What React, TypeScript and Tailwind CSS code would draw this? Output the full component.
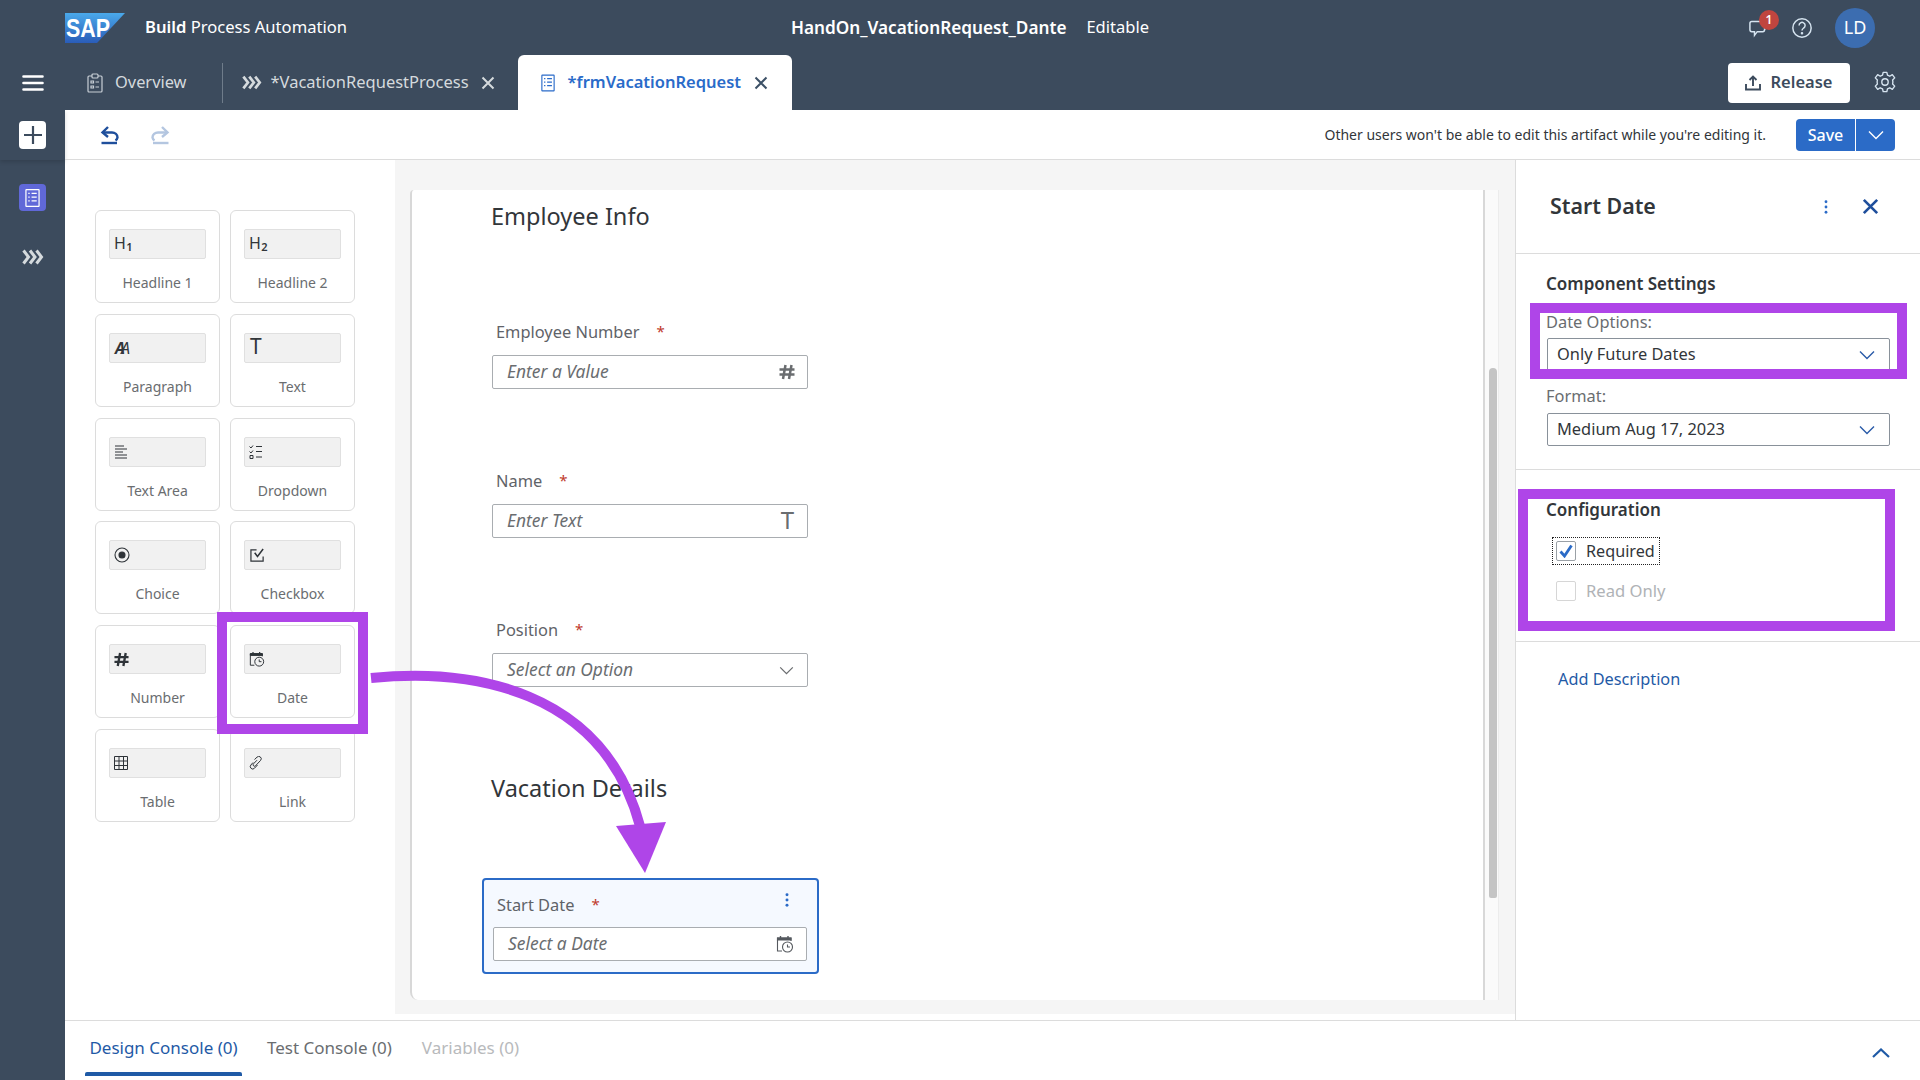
import React from "react";

function Chevrons({ className = "", color = "currentColor" }: { className?: string; color?: string }) {
  return (
    <svg viewBox="0 0 22 16" className={className} fill="none" stroke={color} strokeWidth="3">
      <polyline points="1.5,1.5 6.5,8 1.5,14.5" />
      <polyline points="8,1.5 13,8 8,14.5" />
      <polyline points="14.5,1.5 19.5,8 14.5,14.5" />
    </svg>
  );
}
function Close({ className = "", color = "currentColor", w = 2 }: { className?: string; color?: string; w?: number }) {
  return (
    <svg viewBox="0 0 14 14" className={className} fill="none" stroke={color} strokeWidth={w}>
      <path d="M1.5 1.5 L12.5 12.5 M12.5 1.5 L1.5 12.5" />
    </svg>
  );
}
function ChevronDown({ className = "", color = "currentColor" }: { className?: string; color?: string }) {
  return (
    <svg viewBox="0 0 16 10" className={className} fill="none" stroke={color} strokeWidth="1.4">
      <polyline points="1,1.5 8,8.5 15,1.5" />
    </svg>
  );
}
function CalClock({ className = "" }: { className?: string }) {
  return (
    <svg viewBox="0 0 18 18" className={className} fill="none" stroke="currentColor" strokeWidth="1.1">
      <path d="M6 16 H1.5 V3 H15 V6" />
      <path d="M1.5 3 H15 V5 H1.5 Z" fill="currentColor" />
      <path d="M4.5 1 V3 M12 1 V3" strokeWidth="1.4" />
      <circle cx="11.5" cy="12" r="5" fill="none" />
      <path d="M11.5 9.5 V12 H14" />
    </svg>
  );
}
function FormIcon({ className = "" }: { className?: string }) {
  return (
    <svg viewBox="0 0 16 20" className={className} fill="none" stroke="currentColor" strokeWidth="1.3">
      <rect x="1" y="1" width="14" height="18" rx="0.5" />
      <path d="M3.5 5 H5 M7 5 H12.5 M3.5 9 H5 M7 9 H12.5 M3.5 13 H5 M7 13 H12.5" />
    </svg>
  );
}
function Clipboard({ className = "" }: { className?: string }) {
  return (
    <svg viewBox="0 0 16 20" className={className} fill="none" stroke="currentColor" strokeWidth="1.2">
      <rect x="1" y="3" width="14" height="16" rx="1" />
      <rect x="5" y="1" width="6" height="4" rx="1" fill="#3c4b5d" />
      <path d="M4 8 H6.5 V10 H4 Z M4 13 H6.5 V15 H4 Z M8.5 9 H12 M8.5 14 H12" />
    </svg>
  );
}
function Hash({ className = "" }: { className?: string }) {
  return (
    <svg viewBox="0 0 16 16" className={className} fill="none" stroke="currentColor" strokeWidth="2.5">
      <path d="M6.5 1 L4 15 M12.5 1 L10 15 M0.5 5.5 H15.5 M0.5 10.5 H15.5" />
    </svg>
  );
}

function PaletteCard({ label, icon }: { label: string; icon: React.ReactNode }) {
  return (
    <div className="h-[93px] rounded-[6px] border border-[#dcdcdc] bg-white flex flex-col items-center pt-[18px]">
      <div className="w-[97px] h-[30px] rounded-[2px] border border-[#e0e0e0] bg-[#f1f1f1] flex items-center pl-[4px] text-[#2e3338]">
        {icon}
      </div>
      <div className="mt-[14px] text-[14px] leading-[20px] text-[#6a6d70]">{label}</div>
    </div>
  );
}

function Sub({ n }: { n: string }) {
  return (
    <span className="mb-[3px] text-[16px] leading-none text-[#32363a] tracking-[0.5px]">
      H<span className="text-[11px] font-semibold relative top-[2px]">{n}</span>
    </span>
  );
}

const palette: { label: string; icon: React.ReactNode }[] = [
  { label: "Headline 1", icon: <Sub n="1" /> },
  { label: "Headline 2", icon: <Sub n="2" /> },
  {
    label: "Paragraph",
    icon: (
      <span className="ml-[1px] text-[16px] leading-none italic text-[#32363a] tracking-[-4px]">
        <b>A</b>A
      </span>
    ),
  },
  { label: "Text", icon: <span className="mb-[3px] text-[21px] leading-none text-[#32363a] ml-[1px]">T</span> },
  {
    label: "Text Area",
    icon: (
      <svg viewBox="0 0 12 14" className="w-[12px] h-[14px] ml-[1px]" stroke="currentColor" strokeWidth="1">
        <path d="M0 1 H9 M0 4 H12 M0 7 H8 M0 10 H12 M0 13 H12" />
      </svg>
    ),
  },
  {
    label: "Dropdown",
    icon: (
      <svg viewBox="0 0 14 14" className="w-[14px] h-[14px]" fill="none" stroke="currentColor" strokeWidth="1">
        <path d="M0.5 1.5 L2 3 L4 0.5 M0.5 6.5 L2 8 L4 5.5 M1 10.5 H4 V13.5 H1 Z M7 1.5 H13 M7 6.5 H13 M7 12 H13" />
      </svg>
    ),
  },
  {
    label: "Choice",
    icon: (
      <svg viewBox="0 0 16 16" className="w-[16px] h-[16px]" fill="none" stroke="currentColor" strokeWidth="1.1">
        <circle cx="8" cy="8" r="7" />
        <circle cx="8" cy="8" r="3" fill="currentColor" />
      </svg>
    ),
  },
  {
    label: "Checkbox",
    icon: (
      <svg viewBox="0 0 16 16" className="w-[15px] h-[15px] ml-[1px]" fill="none" stroke="currentColor" strokeWidth="1.3">
        <path d="M14 9 V14 H1 V2 H7" />
        <path d="M5 5 L8 9 L14 1" strokeWidth="1.6" />
      </svg>
    ),
  },
  { label: "Number", icon: <Hash className="w-[15px] h-[15px]" /> },
  { label: "Date", icon: <CalClock className="w-[16px] h-[16px]" /> },
  {
    label: "Table",
    icon: (
      <svg viewBox="0 0 14 14" className="w-[14px] h-[14px]" fill="none" stroke="currentColor" strokeWidth="1">
        <path d="M0.5 0.5 H13.5 V13.5 H0.5 Z M0.5 5 H13.5 M0.5 9.5 H13.5 M5 0.5 V13.5 M9.5 0.5 V13.5" />
      </svg>
    ),
  },
  {
    label: "Link",
    icon: (
      <svg viewBox="0 0 14 14" className="w-[14px] h-[14px]" fill="none" stroke="currentColor" strokeWidth="1">
        <path d="M5.5 3.5 L8 1.2 a2.3 2.3 0 0 1 3.6 3.2 L6.5 9.8 a1.4 1.4 0 0 1 -2 -2 L8 4.2" />
        <path d="M8.5 9 L5.5 12.2 a2.3 2.3 0 0 1 -3.6 -3.2 L4 6.5" />
      </svg>
    ),
  },
];

function FieldInput({ text, icon, className = "" }: { text: string; icon: React.ReactNode; className?: string }) {
  return (
    <div className={"h-[34px] rounded-[2px] border border-[#a9adb1] bg-white flex items-center justify-between pl-[14px] text-[#6a6d70] " + className}>
      <span className="italic text-[17.4px] leading-[20px] mb-[3px]">{text}</span>
      {icon}
    </div>
  );
}

function Label({ text }: { text: string }) {
  return (
    <div className="text-[16.4px] leading-[20px] text-[#5f6368] pl-[4px] flex">
      <span>{text}</span>
      <span className="ml-[17px] text-[15px] leading-[18px] text-[#c0392b]">*</span>
    </div>
  );
}

function Select({ text }: { text: string }) {
  return (
    <div className="h-[33px] ml-[31px] mr-[30px] rounded-[2px] border border-[#89919a] flex items-center justify-between pl-[9px] pr-[14px] text-[16.4px] text-[#32363a]">
      <span>{text}</span>
      <ChevronDown className="w-[16px] h-[10px]" color="#2a5ba8" />
    </div>
  );
}

export default function App() {
  return (
    <div className="relative w-[1920px] h-[1080px] overflow-hidden flex flex-col bg-white font-['Noto_Sans','Open_Sans',sans-serif]">
      {/* header */}
      <div className="h-[55px] bg-[#3c4b5d] flex items-center text-white relative">
        <div className="ml-[65px] w-[60px] h-[30px]">
          <svg viewBox="0 0 60 30" className="w-[60px] h-[30px]">
            <defs>
              <linearGradient id="sapg" x1="0" y1="0" x2="0" y2="1">
                <stop offset="0" stopColor="#4aa9ea" />
                <stop offset="1" stopColor="#2a5cb8" />
              </linearGradient>
            </defs>
            <polygon points="0,0 60,0 32,30 0,30" fill="url(#sapg)" />
            <text x="1" y="24" fontFamily="Liberation Sans" fontWeight="700" fontSize="25" fill="#fff" textLength="44" lengthAdjust="spacingAndGlyphs">SAP</text>
          </svg>
        </div>
        <div className="ml-[20px] text-[16.6px] w-[646px]">
          <b className="font-semibold">Build</b> Process Automation
        </div>
        <div className="text-[17.2px] font-semibold">HandOn_VacationRequest_Dante</div>
        <div className="ml-[20px] text-[16.5px]">Editable</div>
        <div className="ml-auto flex items-center mr-[45px]">
          <div className="relative w-[22px] h-[22px] text-[#d6e4f0]">
            <svg viewBox="0 0 24 24" className="w-[22px] h-[22px]" fill="none" stroke="currentColor" strokeWidth="1.6">
              <path d="M3 5 H15 a2 2 0 0 1 2 2 V14 a2 2 0 0 1 -2 2 H9 L6 20 V16 H3 a2 2 0 0 1 -2 -2 V7 a2 2 0 0 1 2 -2 Z" />
              <path d="M12 3 a6 6 0 0 1 10 4 a6 6 0 0 1 -5 6" />
            </svg>
            <div className="absolute left-[10px] top-[-7px] w-[20px] h-[20px] rounded-full bg-[#c0453f] text-white text-[12px] font-semibold flex items-center justify-center">1</div>
          </div>
          <svg viewBox="0 0 24 24" className="w-[22px] h-[22px] ml-[20px] text-[#d6e4f0]" fill="none" stroke="currentColor" strokeWidth="1.6">
            <circle cx="12" cy="12" r="10" />
            <path d="M8.8 9.2 a3.3 3.3 0 1 1 5 2.8 c-1.2 .8 -1.8 1.4 -1.8 2.8" />
            <circle cx="12" cy="17.8" r="0.6" fill="currentColor" />
          </svg>
          <div className="ml-[22px] w-[40px] h-[40px] rounded-full bg-[#3c6db0] flex items-center justify-center text-[18px]">LD</div>
        </div>
      </div>

      {/* tabs row */}
      <div className="h-[55px] bg-[#3c4b5d] flex items-center text-[#d5dadd] relative">
        <svg viewBox="0 0 22 16" className="w-[22px] h-[16px] ml-[22px]" stroke="#fff" strokeWidth="2.6" strokeLinecap="round">
          <path d="M1.5 1.5 H20.5 M1.5 8 H20.5 M1.5 14.5 H20.5" />
        </svg>
        <Clipboard className="w-[16px] h-[20px] ml-[43px] text-[#c8cfd6]" />
        <span className="ml-[12px] text-[16.4px] mb-[1px]">Overview</span>
        <div className="ml-[35px] w-px h-[40px] bg-[#6f7c8a]" />
        <Chevrons className="ml-[19px] w-[20px] h-[15px]" color="#d5dadd" />
        <span className="ml-[9px] text-[16.5px] mb-[1px]">*VacationRequestProcess</span>
        <Close className="ml-[12px] w-[14px] h-[14px]" color="#d5dadd" />
        <div className="ml-[23px] w-[274px] h-[55px] bg-white rounded-t-[6px] flex items-center pl-[23px]">
          <FormIcon className="w-[14px] h-[20px] text-[#2a6bc9]" />
          <span className="ml-[13px] text-[16.5px] font-semibold text-[#2a6bc9] mb-[1px]">*frmVacationRequest</span>
          <Close className="ml-[13px] w-[14px] h-[14px]" color="#3c5066" />
        </div>
        <div className="ml-auto mr-[70px] w-[122px] h-[40px] rounded-[4px] bg-white flex items-center justify-center text-[#3c4b5d] text-[16.5px] font-semibold">
          <svg viewBox="0 0 16 16" className="w-[16px] h-[16px] mr-[9px]" fill="none" stroke="currentColor" strokeWidth="1.9">
            <path d="M1 9 V14.5 H15 V9 M8 11 V2 M4.5 5 L8 1.5 L11.5 5" />
          </svg>
          Release
        </div>
        <svg viewBox="0 0 24 24" className="absolute left-[1874px] top-[16px] w-[22px] h-[22px] text-[#d6e4f0]" fill="none" stroke="currentColor" strokeWidth="1.5">
          <circle cx="12" cy="12" r="3.5" />
          <path d="M10 1.5 H14 L14.7 4.6 L17.2 5.7 L20 4 L22.6 7.5 L20.3 9.7 L20.6 12 L20.3 14.3 L22.6 16.5 L20 20 L17.2 18.3 L14.7 19.4 L14 22.5 H10 L9.3 19.4 L6.8 18.3 L4 20 L1.4 16.5 L3.7 14.3 L3.4 12 L3.7 9.7 L1.4 7.5 L4 4 L6.8 5.7 L9.3 4.6 Z" strokeLinejoin="round" />
        </svg>
      </div>

      {/* body */}
      <div className="flex-1 flex min-h-0">
        {/* sidebar */}
        <div className="w-[65px] bg-[#3c4b5d] flex flex-col items-center">
          <div className="w-full h-[50px] flex items-start justify-center pt-[11px] shadow-[0_2px_4px_rgba(0,0,0,0.15)]">
            <div className="w-[27px] h-[28px] rounded-[4px] bg-white flex items-center justify-center">
              <svg viewBox="0 0 18 18" className="w-[18px] h-[18px]" stroke="#3c4b5d" strokeWidth="2.2">
                <path d="M9 0 V18 M0 9 H18" />
              </svg>
            </div>
          </div>
          <div className="mt-[24px] w-[27px] h-[27px] rounded-[4px] bg-[#6068d8] flex items-center justify-center text-white">
            <FormIcon className="w-[15px] h-[20px]" />
          </div>
          <Chevrons className="mt-[38px] w-[22px] h-[16px]" color="#d5dadd" />
        </div>

        <div className="flex-1 flex flex-col min-w-0">
          {/* toolbar */}
          <div className="h-[50px] border-b border-[#dcdcdc] flex items-center pl-[35px] pr-[25px]">
            <svg viewBox="0 0 20 20" className="mt-[1px] w-[20px] h-[20px] text-[#1f4f9c]" fill="none" stroke="currentColor" strokeWidth="2.4">
              <path d="M8 2 L2.5 7.5 L8 12" />
              <path d="M3 7.5 H12 a5.5 5 0 0 1 5.5 5 a4.5 4.5 0 0 1 -2 3" />
              <path d="M1.5 18 H17" />
            </svg>
            <svg viewBox="0 0 20 20" className="mt-[1px] ml-[30px] w-[20px] h-[20px] text-[#b4c6e0]" fill="none" stroke="currentColor" strokeWidth="2.4">
              <path d="M12 2 L17.5 7.5 L12 12" />
              <path d="M17 7.5 H8 a5.5 5 0 0 0 -5.5 5 a4.5 4.5 0 0 0 2 3" />
              <path d="M18.5 18 H3" />
            </svg>
            <div className="ml-auto text-[14px] text-[#32363a]">Other users won't be able to edit this artifact while you're editing it.</div>
            <div className="ml-[30px] flex h-[32px] rounded-[4px] overflow-hidden bg-[#2b6bc7] text-white">
              <div className="w-[60px] flex items-center justify-center text-[16px] font-medium border-r border-white">Save</div>
              <div className="w-[39px] flex items-center justify-center">
                <ChevronDown className="w-[16px] h-[10px]" color="#fff" />
              </div>
            </div>
          </div>

          {/* content */}
          <div className="flex-1 flex min-h-0">
            {/* palette */}
            <div className="w-[330px] pt-[50px] pl-[30px]">
              <div className="grid grid-cols-[125px_125px] gap-x-[10px] gap-y-[11px]">
                {palette.slice(0, 6).map((p) => (
                  <PaletteCard key={p.label} label={p.label} icon={p.icon} />
                ))}
              </div>
              <div className="mt-[10px] grid grid-cols-[125px_125px] gap-x-[10px] gap-y-[11px]">
                {palette.slice(6).map((p) => (
                  <PaletteCard key={p.label} label={p.label} icon={p.icon} />
                ))}
              </div>
            </div>

            {/* canvas */}
            <div className="w-[1120px] mb-[6px] bg-[#f5f5f5] pl-[15px] pt-[30px] flex">
              <div className="w-[1075px] h-[810px] bg-white border-l-2 border-r-2 border-[#d8d8d8] rounded-bl-[8px] rounded-tl-[4px] pl-[79px] pt-[8px]">
                <div className="text-[23.5px] leading-[36px] text-[#32363a]">Employee Info</div>
                <div className="w-[316px] ml-[1px] mt-[88px]">
                  <Label text="Employee Number" />
                  <FieldInput text="Enter a Value" className="mt-[13px] pr-[12px]" icon={<Hash className="w-[16px] h-[16px] text-[#6a6d70]" />} />
                </div>
                <div className="w-[316px] ml-[1px] mt-[82px]">
                  <Label text="Name" />
                  <FieldInput text="Enter Text" className="mt-[13px] pr-[13px]" icon={<span className="mb-[3px] text-[24px] leading-none text-[#6a6d70]">T</span>} />
                </div>
                <div className="w-[316px] ml-[1px] mt-[82px]">
                  <Label text="Position" />
                  <FieldInput text="Select an Option" className="mt-[13px] pr-[13px]" icon={<ChevronDown className="w-[15px] h-[9px]" color="#6a6d70" />} />
                </div>
                <div className="text-[23.5px] leading-[36px] text-[#32363a] mt-[83px]">Vacation Details</div>
                <div className="w-[337px] h-[96px] ml-[-9px] mt-[72px] rounded-[4px] border-2 border-[#2b6bc7] bg-[#f5f9ff] pl-[9px] pt-[15px] pr-[10px]">
                  <div className="flex items-start justify-between pr-[18px]">
                    <Label text="Start Date" />
                    <svg viewBox="0 0 4 16" className="w-[4px] h-[14px] mt-[-2px]" fill="#2b6bc7">
                      <circle cx="2" cy="2" r="1.7" /><circle cx="2" cy="8" r="1.7" /><circle cx="2" cy="14" r="1.7" />
                    </svg>
                  </div>
                  <FieldInput text="Select a Date" className="mt-[12px] pr-[12px]" icon={<CalClock className="w-[18px] h-[18px] text-[#55595e]" />} />
                </div>
              </div>
              <div className="w-[14px] h-[810px] bg-[#fafafa] border-r border-[#ececec] pt-[178px] pl-[4px]">
                <div className="w-[8px] h-[530px] rounded-t-[4px] rounded-b-[2px] bg-[#c4c4c4]" />
              </div>
            </div>

            {/* properties */}
            <div className="w-[405px] border-l border-[#dcdcdc]">
              <div className="h-[94px] border-b border-[#dcdcdc] flex items-center pl-[34px] pr-[41px]">
                <span className="text-[21.4px] font-semibold text-[#32363a]">Start Date</span>
                <svg viewBox="0 0 4 16" className="ml-auto w-[4px] h-[14px]" fill="#2b6bc7">
                  <circle cx="2" cy="2" r="1.6" /><circle cx="2" cy="8" r="1.6" /><circle cx="2" cy="14" r="1.6" />
                </svg>
                <Close className="ml-[34px] w-[17px] h-[17px]" color="#1f4f9c" w={2.2} />
              </div>
              <div className="h-[216px] border-b border-[#dcdcdc] pt-[19px]">
                <div className="pl-[30px] text-[17px] leading-[22px] font-semibold text-[#32363a]">Component Settings</div>
                <div className="pl-[30px] mt-[16px] text-[16.4px] leading-[22px] text-[#6a6d70]">Date Options:</div>
                <div className="mt-[5px]"><Select text="Only Future Dates" /></div>
                <div className="pl-[30px] mt-[14px] text-[16.4px] leading-[22px] text-[#6a6d70]">Format:</div>
                <div className="mt-[6px]"><Select text="Medium Aug 17, 2023" /></div>
              </div>
              <div className="h-[172px] border-b border-[#dcdcdc] pt-[29px]">
                <div className="pl-[30px] text-[17px] leading-[22px] font-semibold text-[#32363a]">Configuration</div>
                <div className="ml-[36px] mt-[16px] w-[108px] h-[28px] border border-dotted border-[#222] flex items-center pl-[3px]">
                  <div className="w-[20px] h-[20px] rounded-[2px] border border-[#9aa0a6] flex items-center justify-center">
                    <svg viewBox="0 0 14 14" className="w-[14px] h-[14px]" fill="none" stroke="#2b6bc7" strokeWidth="2.8">
                      <path d="M1.5 7.5 L5.5 12 L12.5 1.5" />
                    </svg>
                  </div>
                  <span className="ml-[10px] text-[16.2px] text-[#32363a]">Required</span>
                </div>
                <div className="ml-[40px] mt-[14px] flex items-center">
                  <div className="w-[20px] h-[20px] rounded-[2px] border border-[#d6d6d6]" />
                  <span className="ml-[10px] text-[16.6px] text-[#b0b3b6]">Read Only</span>
                </div>
              </div>
              <div className="pl-[42px] pt-[26px] text-[16.3px] leading-[22px] text-[#1f5aa6]">Add Description</div>
            </div>
          </div>

          {/* console */}
          <div className="h-[60px] border-t border-[#dcdcdc] flex items-start pl-[20px] pr-[30px]">
            <div className="flex flex-col items-center w-[157px] h-[55px]">
              <span className="mt-[15px] text-[17px] leading-[24px] text-[#1f5aa6]">Design Console (0)</span>
              <div className="mt-auto w-full h-[4px] rounded-t-[2px] bg-[#1f5aa6]" />
            </div>
            <span className="ml-[25px] mt-[15px] text-[17px] leading-[24px] text-[#6a6d70]">Test Console (0)</span>
            <span className="ml-[30px] mt-[15px] text-[17px] leading-[24px] text-[#b8babc]">Variables (0)</span>
            <svg viewBox="0 0 18 10" className="ml-auto mt-[27px] w-[18px] h-[10px]" fill="none" stroke="#1f5aa6" strokeWidth="2.2">
              <polyline points="1,9 9,1.5 17,9" />
            </svg>
          </div>
        </div>
      </div>

      {/* annotation overlays */}
      <div className="absolute left-[217px] top-[612px] w-[151px] h-[122px] border-[10px] border-[#af45e8]" />
      <div className="absolute left-[1530px] top-[303px] w-[377px] h-[76px] border-[10px] border-[#af45e8]" />
      <div className="absolute left-[1518px] top-[489px] w-[377px] h-[142px] border-[10px] border-[#af45e8]" />
      <svg viewBox="360 660 320 220" className="absolute left-[360px] top-[660px] w-[320px] h-[220px]" fill="none">
        <path d="M371 678 C 470 668, 603 688, 640 826" stroke="#af45e8" strokeWidth="10" />
        <polygon points="616,826 666,822 645,873" fill="#af45e8" />
      </svg>
    </div>
  );
}
